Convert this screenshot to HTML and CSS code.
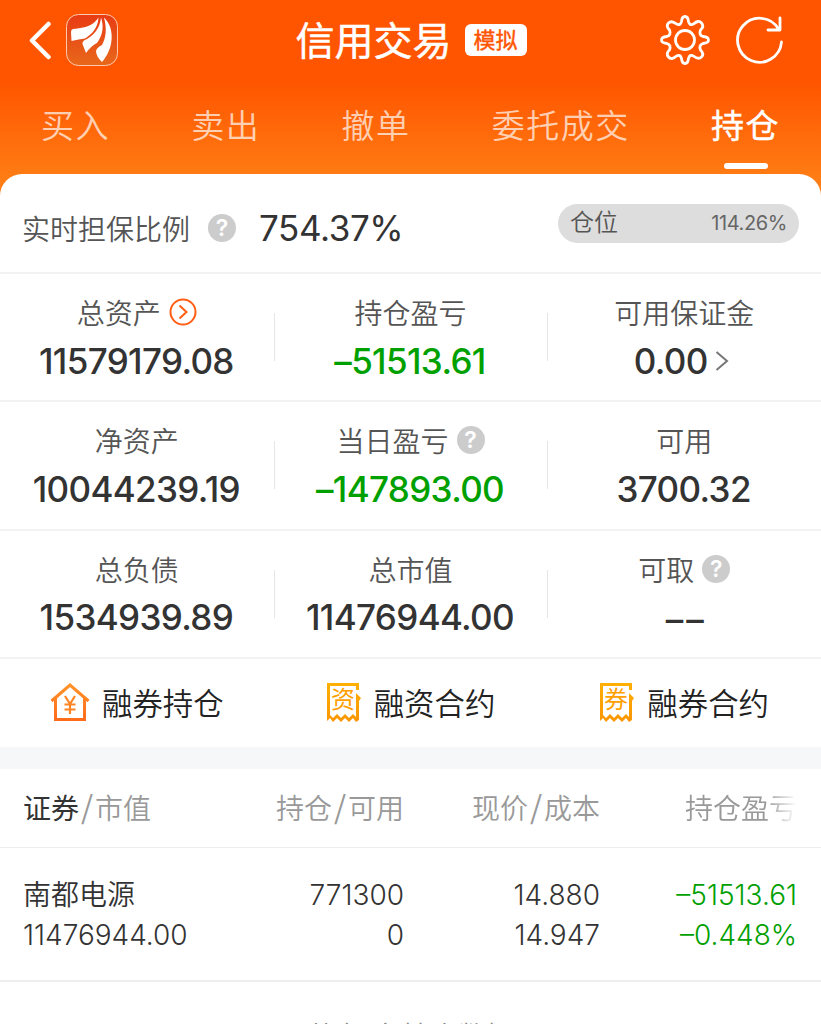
FILE: index.html
```html
<!DOCTYPE html>
<html lang="zh-CN">
<head>
	<meta charset="UTF-8">
	<title>信用交易 - 持仓</title>
	<link rel="stylesheet" href="styles.css">
</head>
<body>
	<div class="header">
		<div class="topbar">
			<div class="topbar-left">
				<svg class="back" width="24" height="40" viewBox="0 0 24 40"><path d="M20.500 4L4 20.500L20.500 37"/></svg>
				<svg class="logo" width="52" height="52" viewBox="0 0 52 52">
					<defs><linearGradient id="logoBg" x1="0" y1="0" x2="0" y2="1"><stop offset="0" stop-color="#e83b14"/><stop offset="1" stop-color="#e8681a"/></linearGradient></defs>
					<rect x=".5" y=".5" width="51" height="51" rx="12" fill="url(#logoBg)" stroke="#ffc9ad"/>
					<path fill="#fff" d="M32.500 3.500C28 11 20 14 7 15Q5 15.500 5 18L5.500 27Q13 25 19 24.500C26 20 32 14 32.500 3.500zM35 3.500C34 14 28 22 18 26.500Q16 28 16.500 30L20 39Q25 32 31 29C37 21 38 12 35 3.500zM38 3.500C41 15 40 24 36 31Q30 34 30 37.500Q30.500 43 36 48C47 36 50 15 38 3.500z"/>
				</svg>
			</div>
			<div class="topbar-title">
				<h1>信用交易</h1>
				<span class="tag">模拟</span>
			</div>
			<div class="topbar-right">
				<svg class="line-icon" width="52" height="52" viewBox="0 0 52 52">
					<circle cx="26" cy="26" r="9.500"/>
					<path d="M22.500 7.500Q23 2.500 26 2.500T29.500 7.500Q30.500 12 34.500 10Q39.500 5.500 42.500 9T41.500 16Q39.500 21 44 22.500Q49.500 23 49.500 26T44 29.500Q39.500 31 41.500 36Q45.500 40 42.500 43T34.500 42Q30.500 40 29.500 44.500Q29 49.500 26 49.500T22.500 44.500Q21.500 40 17.500 42Q12.500 46.500 9.500 43T10.500 36Q12.500 31 8 29.500Q2.500 29 2.500 26T8 22.500Q12.500 21 10.500 16Q6.500 12 9.500 9T17.500 10Q21.500 12 22.500 7.500z"/>
				</svg>
				<svg class="line-icon" width="50" height="50" viewBox="0 0 50 50"><path d="M46.500 27A22 22 0 1 1 43.500 14M33 15H45V3"/></svg>
			</div>
		</div>
		<div class="tabs">
			<span class="tab">买入</span>
			<span class="tab">卖出</span>
			<span class="tab">撤单</span>
			<span class="tab">委托成交</span>
			<span class="tab is-active">持仓</span>
		</div>
	</div>

	<div class="panel">
		<div class="ratio">
			<span class="ratio-label">实时担保比例</span>
			<i class="help">?</i>
			<span class="ratio-num">754.37%</span>
			<div class="position"><span>仓位</span><span class="position-num">114.26%</span></div>
		</div>

		<div class="stats">
			<div class="stat">
				<div class="stat-label">总资产<svg class="go" width="28" height="28" viewBox="0 0 28 28"><circle cx="14" cy="14" r="12.500"/><path d="M10.500 7.500L17.500 14L10.500 20.500"/></svg></div>
				<div class="stat-num">11579179.08</div>
			</div>
			<div class="stat">
				<div class="stat-label">持仓盈亏</div>
				<div class="stat-num down">–51513.61</div>
			</div>
			<div class="stat">
				<div class="stat-label">可用保证金</div>
				<div class="stat-num has-more">0.00<svg class="more" width="14" height="22" viewBox="0 0 14 22"><path d="M1.500 2L12 11L1.500 20"/></svg></div>
			</div>
		</div>
		<div class="stats">
			<div class="stat">
				<div class="stat-label">净资产</div>
				<div class="stat-num">10044239.19</div>
			</div>
			<div class="stat">
				<div class="stat-label">当日盈亏<i class="help">?</i></div>
				<div class="stat-num down">–147893.00</div>
			</div>
			<div class="stat">
				<div class="stat-label">可用</div>
				<div class="stat-num">3700.32</div>
			</div>
		</div>
		<div class="stats">
			<div class="stat">
				<div class="stat-label">总负债</div>
				<div class="stat-num">1534939.89</div>
			</div>
			<div class="stat">
				<div class="stat-label">总市值</div>
				<div class="stat-num">11476944.00</div>
			</div>
			<div class="stat">
				<div class="stat-label">可取<i class="help">?</i></div>
				<div class="stat-num dashes">––</div>
			</div>
		</div>

		<div class="links">
			<div class="link">
				<svg width="40" height="40" viewBox="0 0 40 40">
					<defs><linearGradient id="house" x1="0" y1="0" x2="0" y2="1"><stop offset="0" stop-color="#ff9228"/><stop offset="1" stop-color="#ff6c1c"/></linearGradient></defs>
					<path d="M1.500 19L20 3L38.500 19M5.500 16V37.500H34.500V16" fill="none" stroke="url(#house)" stroke-width="3"/>
					<path d="M15 14L20 22L25 14M20 22V32M14.500 22.500H25.500M14.500 27.500H25.500" fill="none" stroke="#ff8423" stroke-width="2.200"/>
				</svg>融券持仓
			</div>
			<div class="link">
				<svg width="36" height="40" viewBox="0 0 36 40">
					<defs><linearGradient id="bill" x1="0" y1="0" x2="0" y2="1"><stop offset="0" stop-color="#ffb000"/><stop offset="1" stop-color="#fa9500"/></linearGradient></defs>
					<path class="bill" d="M1 1H33V8H30V4H4V33L7 36L11 32L15 36L19 32L23 36L27 32L30 35V11L35 16L33 19V38L30 40L27 36L23 40L19 36L15 40L11 36L7 40L4 36L1 39z"/>
					<text x="17" y="26" class="bill-text">资</text>
				</svg>融资合约
			</div>
			<div class="link">
				<svg width="36" height="40" viewBox="0 0 36 40">
					<path class="bill" d="M1 1H33V8H30V4H4V33L7 36L11 32L15 36L19 32L23 36L27 32L30 35V11L35 16L33 19V38L30 40L27 36L23 40L19 36L15 40L11 36L7 40L4 36L1 39z"/>
					<text x="17" y="26" class="bill-text">券</text>
				</svg>融券合约
			</div>
		</div>
	</div>

	<div class="holdings">
		<div class="row row-head">
			<span><b>证券</b><i class="slash">/</i>市值</span>
			<span>持仓<i class="slash">/</i>可用</span>
			<span>现价<i class="slash">/</i>成本</span>
			<span class="fade">持仓盈亏</span>
		</div>
		<div class="row row-item">
			<div>南都电源<br>11476944.00</div>
			<div>771300<br>0</div>
			<div>14.880<br>14.947</div>
			<div class="down">–51513.61<br>–0.448%</div>
		</div>
		<div class="foot">共有1条持仓数据</div>
	</div>
</body>
</html>
```
FILE: styles.css
```css
* {box-sizing:border-box;}
body {margin:0; height:1024px; overflow:hidden; font-family:Inter, "Noto Sans CJK SC", sans-serif; color:#333; background:#fff;}
h1, b, i {margin:0; font-weight:normal; font-style:normal;}
svg {flex:none;}

/* 顶部 */
.header {height:204px; background:linear-gradient(#ff5500 0, #ff5500 82px, #ff7d14 180px);}
.topbar {display:flex; align-items:center; justify-content:space-between; height:80px; padding:0 35px 0 28px;}
.topbar-left, .topbar-right, .topbar-title {display:flex; align-items:center;}
.topbar-left {gap:14px; width:132px;}
.back {fill:none; stroke:#fff; stroke-width:4.500; stroke-linecap:round; stroke-linejoin:round;}
.topbar-title {gap:13px; padding-left:3px;}
.topbar-title h1 {padding-top:1px; font-size:39px; line-height:56px; color:#fff; -webkit-text-stroke:.5px #fff;}
.tag {width:62px; height:32px; line-height:32px; text-align:center; font-size:22px; color:#ff5500; background:#fff; border-radius:6px; -webkit-text-stroke:.4px #ff5500;}
.topbar-right {gap:24px; width:127px;}
.line-icon {fill:none; stroke:#fff; stroke-width:2.800; stroke-linecap:round; stroke-linejoin:round;}
.tabs {display:flex; justify-content:space-between; padding:21px 41px 0 41px; font-size:33px; line-height:50px; font-weight:350; letter-spacing:1.500px; color:rgba(255,255,255,.7);}
.is-active {font-weight:400; color:#fff; -webkit-text-stroke:.4px #fff;}
.is-active:after {content:''; display:block; width:44px; height:6px; margin:12px auto 0; background:#fff; border-radius:3px;}

/* 资产面板 */
.panel {margin-top:-30px; background:#fff; border-radius:22px 22px 0 0;}
.ratio {display:flex; align-items:center; height:100px; padding:10px 22px 0 22px; border-bottom:2px solid #f3f3f3;}
.ratio-label {font-size:28px; font-weight:350; color:#555;}
.ratio-num {margin-left:23px; font-size:35px; letter-spacing:-.4px;}
.help {flex:none; display:inline-block; width:28px; height:28px; margin-left:8px; line-height:28px; text-align:center; font-size:23px; font-weight:600; color:#fff; background:#ccc; border-radius:50%;}
.ratio .help {margin-left:18px;}
.position {display:flex; align-items:center; justify-content:space-between; width:241px; height:39px; margin:-10px 0 0 auto; padding:0 12px; font-size:24px; line-height:36px; font-weight:350; color:#555; background:#ddd; border-radius:20px;}
.position-num {font-size:20px; font-weight:400; letter-spacing:-.4px; color:#666;}
.stats {display:grid; grid-template-columns:repeat(3, 1fr); height:128.400px; padding-top:18px; border-bottom:2px solid #f3f3f3;}
.stat {position:relative; text-align:center;}
.stat + .stat:before {position:absolute; top:21px; left:0; content:''; width:1px; height:48px; background:#e6e6e6;}
.stat-label {display:flex; align-items:center; justify-content:center; height:40px; font-size:28px; font-weight:350; color:#555;}
.stat-num {display:flex; align-items:center; justify-content:center; height:57px; padding-right:1px; font-size:35px; font-weight:500; letter-spacing:-.65px;}
.has-more {padding-right:6px;}
.dashes {padding:4px 0 0 4px; letter-spacing:3px;}
.go {margin-left:8px; fill:none; stroke:#ff5e14; stroke-width:2;}
.more {margin-left:7px; fill:none; stroke:#777; stroke-width:2;}
.down {color:#00a000;}
.links {display:grid; grid-template-columns:repeat(3, 1fr); height:88px; padding-bottom:2px;}
.link {display:flex; align-items:center; justify-content:center; gap:12px; font-size:30.400px; font-weight:350; color:#222;}
.bill {fill:url(#bill);}
.bill-text {font-size:24px; font-weight:400; text-anchor:middle; fill:#ffa000;}

/* 持仓列表 */
.holdings {border-top:22px solid #f6f7f9;}
.row {display:grid; grid-template-columns:253px 128px 196px 197px; padding:0 24px 0 23px; font-size:28px; text-align:right; white-space:nowrap;}
.row > :first-child {text-align:left;}
.row-head {height:79px; line-height:80px; font-weight:350; color:#999; border-bottom:1px solid #eee;}
.row-head b {font-weight:400; color:#333;}
.slash {display:inline-block; width:15.900px; text-align:center; font-family:"Noto Sans CJK SC", sans-serif; font-size:31px; line-height:1;}
.row-item {height:134px; padding-top:27px; line-height:40px; font-weight:350; border-bottom:2px solid #eee;}
.fade {-webkit-mask-image:linear-gradient(90deg, #000 84%, transparent); mask-image:linear-gradient(90deg, #000 84%, transparent);}
.foot {padding-top:35px; text-align:center; font-size:28px; line-height:40px; font-weight:350; color:#888;}
```
